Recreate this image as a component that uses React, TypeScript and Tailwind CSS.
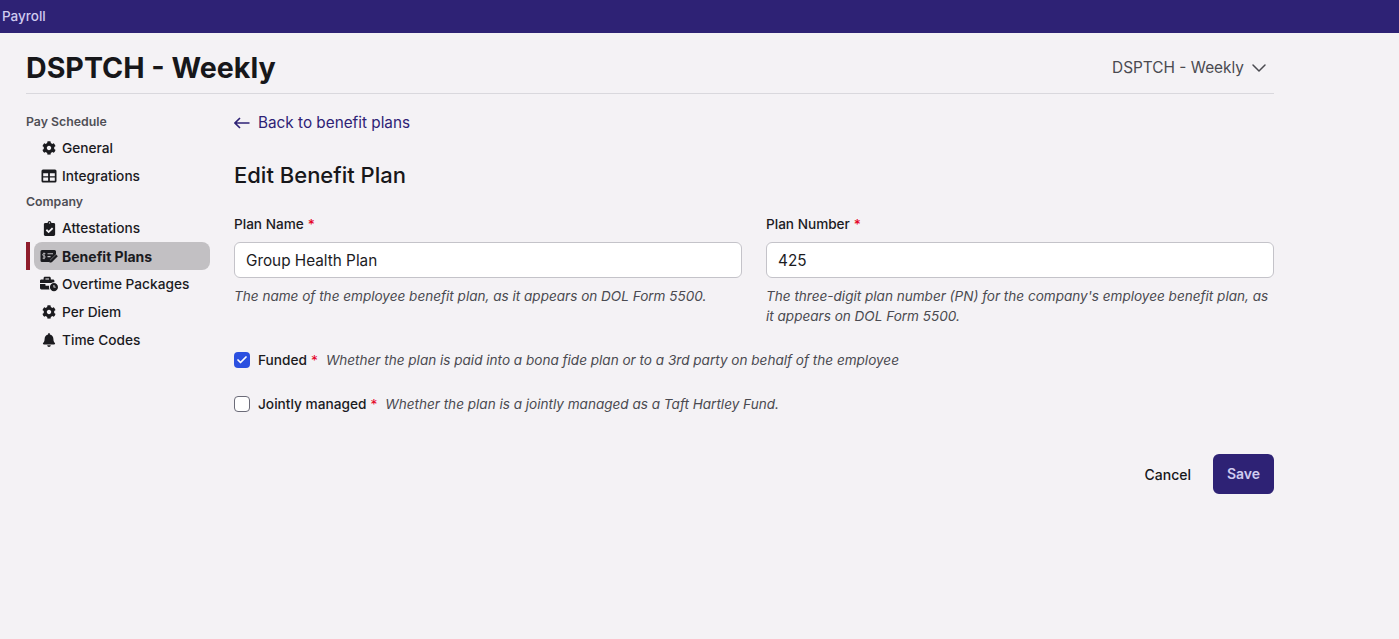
import { FaBell, FaBusinessTime, FaClipboardCheck, FaCog } from 'react-icons/fa';
import { Check, ChevronDown } from 'lucide-react';
import type { ReactNode } from 'react';

function TableIcon() {
  return (
    <svg viewBox="0 0 16 16" className="h-[16px] w-[16px]" fill="currentColor">
      <path
        fillRule="evenodd"
        d="M2 1.5h12a1.5 1.5 0 0 1 1.5 1.5v10a1.5 1.5 0 0 1-1.5 1.5H2A1.5 1.5 0 0 1 .5 13V3A1.5 1.5 0 0 1 2 1.5zM2.2 5.2v3h4.9v-3zm6.7 0v3h4.9v-3zM2.2 9.6v3.2h4.9V9.6zm6.7 0v3.2h4.9V9.6z"
      />
    </svg>
  );
}

function MoneyPenIcon() {
  return (
    <svg viewBox="0 0 18 14" className="h-[14px] w-[18px]" fill="currentColor">
      <path d="M2 1h12.5A1.5 1.5 0 0 1 16 2.5v2.7L10.4 10.8l-.6 2.2H2A1.5 1.5 0 0 1 .5 11.5v-9A1.5 1.5 0 0 1 2 1z" />
      <path d="M16.2 5.6l1.6 1.6-6 6-2.3.6.6-2.3z" />
      <path d="M5.4 4.6H3.4c-.9 0-.9 2.2 0 2.2h1c.9 0 .9 2.4 0 2.4H2.6M4 3.6v6.6" stroke="#c2c0c3" strokeWidth="0.9" fill="none" />
      <path d="M7.5 4.8h5.5M7.5 7.6h3" stroke="#c2c0c3" strokeWidth="1.1" fill="none" />
    </svg>
  );
}

function BackArrow() {
  return (
    <svg viewBox="0 0 16 12" className="h-[12px] w-[16px]" fill="none" stroke="currentColor" strokeWidth="1.6">
      <path d="M15.5 6H1M6 1 1 6l5 5" />
    </svg>
  );
}

function NavItem({ icon, label, active }: { icon: ReactNode; label: string; active?: boolean }) {
  return (
    <div className="flex h-7 items-stretch">
      <div className={`w-1 ${active ? 'bg-[#8f1d2c]' : ''}`} />
      <div
        className={`ml-1 flex w-[176px] items-center rounded-lg pl-2 ${
          active ? 'bg-[#c2c0c3] text-[14px] font-bold text-[#1b1b1f]' : 'text-[13.7px] font-medium text-[#1b1b1f]'
        }`}
      >
        <span className="-ml-[2px] mr-[4px] flex w-[18px] shrink-0 justify-center">{icon}</span>
        {label}
      </div>
    </div>
  );
}

function Required() {
  return <span className="ml-1 text-[#e5001f]">*</span>;
}

function Field({ label, value, hint }: { label: string; value: string; hint: ReactNode }) {
  return (
    <div className="flex-1">
      <div className="h-5 text-[13.6px] font-medium leading-5 text-[#1b1b1f]">
        {label}
        <Required />
      </div>
      <div className="mt-2 flex h-9 items-center rounded-md border border-[#c4c3c9] bg-white pl-[11px] pt-[2px] text-[15.3px] text-[#1b1b1f]">
        {value}
      </div>
      <p className="mt-2 text-[13.55px] italic leading-5 text-[#4a4a50]">{hint}</p>
    </div>
  );
}

export default function App() {
  return (
    <div className="min-h-[639px] bg-[#f4f2f5] font-['Inter',sans-serif] text-[#1b1b1f]">
      <div className="flex h-[33px] items-center bg-[#2e2275] pl-[2px] text-[13.5px] font-medium text-[#d0cbf0]">Payroll</div>

      <div className="ml-[26px] w-[1248px]">
        <header className="flex h-[61px] items-center justify-between border-b border-[#d9d8dd] pt-[10px]">
          <h1 className="text-[28.6px] font-bold leading-none text-[#17171a]">DSPTCH - Weekly</h1>
          <div className="flex items-center gap-[3px] pr-[3px] text-[15.4px] text-[#4a4a50]">
            DSPTCH - Weekly
            <ChevronDown size={24} strokeWidth={1.5} />
          </div>
        </header>

        <div className="flex">
          <aside className="w-[208px] shrink-0 pt-[18px]">
            <div className="flex h-5 items-center text-[12.3px] font-semibold text-[#4f4f55]">Pay Schedule</div>
            <div className="mt-[2px]">
              <NavItem icon={<FaCog size={14} />} label="General" />
              <NavItem icon={<TableIcon />} label="Integrations" />
            </div>
            <div className="flex h-[24px] items-center text-[12.3px] font-semibold text-[#4f4f55]">Company</div>
            <NavItem icon={<FaClipboardCheck size={15} />} label="Attestations" />
            <NavItem active icon={<MoneyPenIcon />} label="Benefit Plans" />
            <NavItem icon={<FaBusinessTime size={18} />} label="Overtime Packages" />
            <NavItem icon={<FaCog size={14} />} label="Per Diem" />
            <NavItem icon={<FaBell size={14} />} label="Time Codes" />
          </aside>

          <main className="flex-1">
            <div className="mt-[17px] flex h-6 items-center gap-2 text-[15.3px] text-[#2e2275]">
              <BackArrow />
              Back to benefit plans
            </div>

            <h2 className="mt-[24px] text-[22px] font-medium leading-8 text-[#17171a]">Edit Benefit Plan</h2>

            <div className="mt-[23px] flex gap-6">
              <Field
                label="Plan Name"
                value="Group Health Plan"
                hint="The name of the employee benefit plan, as it appears on DOL Form 5500."
              />
              <Field
                label="Plan Number"
                value="425"
                hint="The three-digit plan number (PN) for the company's employee benefit plan, as it appears on DOL Form 5500."
              />
            </div>

            <div className="mt-[22px] flex h-6 items-center text-[13.7px]">
              <span className="flex h-4 w-4 items-center justify-center rounded bg-[#2b50e0] text-white">
                <Check size={12} strokeWidth={3.5} />
              </span>
              <span className="ml-2 font-medium">Funded</span>
              <Required />
              <span className="ml-2 text-[13.55px] italic text-[#4a4a50]">
                Whether the plan is paid into a bona fide plan or to a 3rd party on behalf of the employee
              </span>
            </div>

            <div className="mt-5 flex h-6 items-center text-[13.7px]">
              <span className="h-4 w-4 rounded border border-[#6b6b78] bg-white" />
              <span className="ml-2 font-medium">Jointly managed</span>
              <Required />
              <span className="ml-2 text-[13.55px] italic text-[#4a4a50]">
                Whether the plan is a jointly managed as a Taft Hartley Fund.
              </span>
            </div>

            <div className="mt-[38px] flex items-center justify-end gap-[22px]">
              <button className="mt-[2px] text-sm font-medium text-[#17171a]">Cancel</button>
              <button className="h-10 w-[61px] rounded-md bg-[#2e2275] text-sm font-semibold text-[#d0cbf0]">Save</button>
            </div>
          </main>
        </div>
      </div>
    </div>
  );
}
